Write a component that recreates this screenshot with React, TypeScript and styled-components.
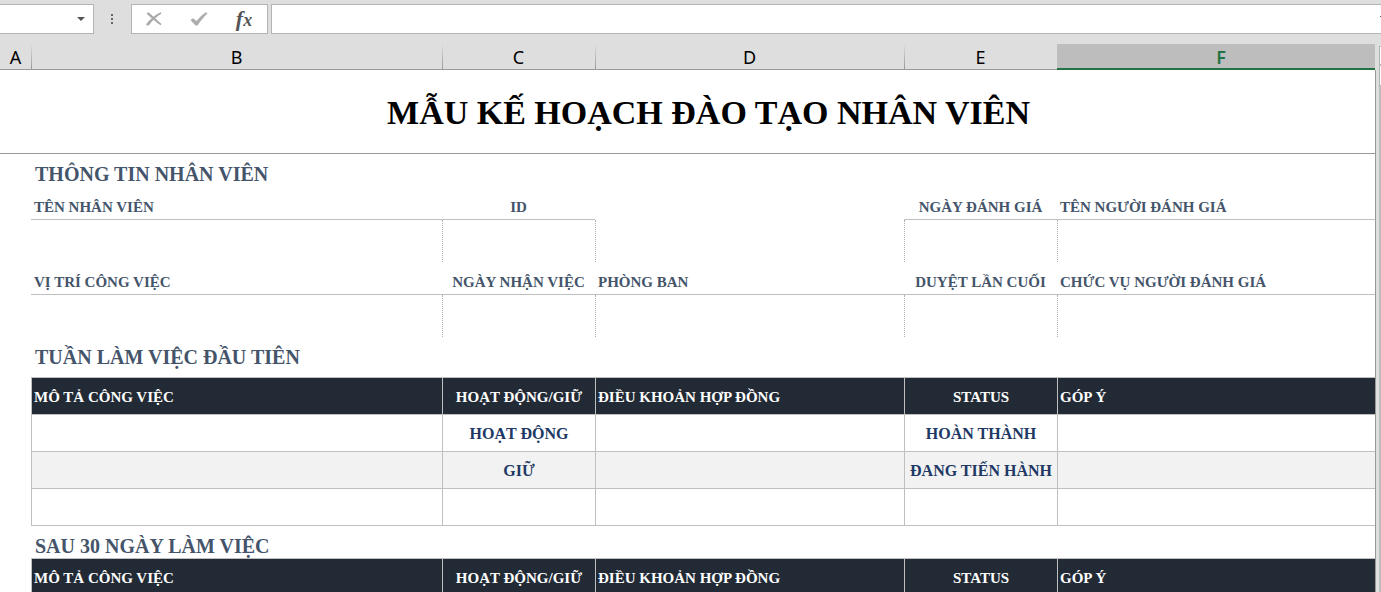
import React from "react";
import styled, { createGlobalStyle, css } from "styled-components";

const GlobalStyle = createGlobalStyle`
  *, *::before, *::after { box-sizing: border-box; }
  body { margin: 0; background: #dedede; }
`;

const color = {
  chrome: "#dedede",
  chromeBorder: "#b4b4b4",
  sheetBorder: "#999999",
  cellBorder: "#bfbfbf",
  heading: "#44546a",
  navy: "#203864",
  dark: "#222a35",
  stripe: "#f2f2f2",
  green: "#217346",
};

const cellColumns = "411fr 153px 309fr 153px 318fr";

const Shell = styled.div`
  display: flex;
  flex-direction: column;
  height: 100vh;
  overflow: hidden;
  background: ${color.chrome};
  font-family: "Liberation Serif", "Times New Roman", serif;
`;

const FormulaBar = styled.div`
  display: flex;
  flex: none;
  height: 44px;
  padding: 4px 0 10px;
`;

const NameBox = styled.div`
  display: flex;
  flex: none;
  width: 94px;
  background: #fff;
  border: 1px solid ${color.chromeBorder};
  border-left: 0;
`;

const BarInput = styled.input`
  flex: 1;
  min-width: 0;
  padding: 0 6px;
  border: 0;
  outline: 0;
  background: transparent;
  font: 16px "Noto Sans", sans-serif;
`;

const BarButton = styled.button<{ $width: number }>`
  display: flex;
  flex: none;
  align-items: center;
  justify-content: center;
  width: ${(p) => p.$width}px;
  padding: 0;
  border: 0;
  background: transparent;
  overflow: hidden;
`;

const Grip = styled.svg`
  flex: none;
  width: 37px;
  height: 30px;
`;

const ButtonGroup = styled.div`
  display: flex;
  flex: none;
  width: 137px;
  margin-right: 3px;
  background: #fff;
  border: 1px solid ${color.chromeBorder};
`;

const FormulaField = styled.div`
  display: flex;
  flex: 1;
  min-width: 0;
  background: #fff;
  border: 1px solid ${color.chromeBorder};
  border-right: 0;
`;

const Workspace = styled.div`
  display: flex;
  flex: 1;
  min-height: 0;
`;

const Pane = styled.div`
  display: flex;
  flex-direction: column;
  flex: 1;
  min-width: 0;
`;

const ColumnHeaders = styled.div`
  display: grid;
  flex: none;
  grid-template-columns: 31px ${cellColumns};
  height: 26px;
  margin-right: 1px;
  font: 18px/27px "Noto Sans", sans-serif;
  text-align: center;
`;

const ColumnHeader = styled.div<{ $active?: boolean; $first?: boolean }>`
  height: 26px;
  border-bottom: 1px solid ${color.sheetBorder};
  color: #000;
  ${(p) =>
    !p.$first &&
    css`
      background: linear-gradient(${color.chrome}, ${color.sheetBorder}) left / 1px 100% no-repeat;
    `}
  ${(p) =>
    p.$active &&
    css`
      padding-left: 10px;
      background: #bdbdbd;
      border-bottom: 2px solid ${color.green};
      color: ${color.green};
      font-weight: 600;
    `}
`;

const Sheet = styled.main`
  flex: 1;
  background: #fff;
  border-right: 1px solid ${color.sheetBorder};
`;

const Title = styled.h1`
  margin: 0;
  padding: 0 0 0 42px;
  height: 84px;
  border-bottom: 1px solid ${color.sheetBorder};
  font-size: 34px;
  line-height: 86px;
  text-align: center;
  color: #000;
`;

const Content = styled.div`
  padding-left: 31px;
`;

const SectionTitle = styled.h2<{ $compact?: boolean }>`
  display: flex;
  align-items: ${(p) => (p.$compact ? "flex-end" : "center")};
  height: ${(p) => (p.$compact ? 32 : 40)}px;
  margin: 0;
  padding-left: 4px;
  font-size: 20px;
  line-height: 24px;
  color: ${color.heading};
`;

const Table = styled.table`
  display: block;
  width: 100%;
`;

const Body = styled.tbody`
  display: block;
`;

const Head = styled.thead`
  display: block;
`;

const Row = styled.tr<{ $striped?: boolean }>`
  display: grid;
  grid-template-columns: ${cellColumns};
  background: ${(p) => (p.$striped ? color.stripe : "transparent")};
`;

const FieldLabel = styled.th<{ $center?: boolean; $line?: boolean; $tall?: boolean }>`
  height: ${(p) => (p.$tall ? 33 : 26)}px;
  padding: ${(p) => (p.$tall ? 11 : 4)}px 0 0 ${(p) => (p.$center ? 0 : 3)}px;
  border-bottom: 1px solid ${(p) => (p.$line ? color.cellBorder : "transparent")};
  font-size: 15px;
  line-height: 18px;
  text-align: ${(p) => (p.$center ? "center" : "left")};
  white-space: nowrap;
  color: ${color.heading};
`;

const FieldValue = styled.td<{ $divided?: boolean }>`
  height: 42px;
  padding: 0;
  border-left: 1px ${(p) => (p.$divided ? "dotted" : "none")} #b0b0b0;
`;

const HeadCell = styled.th<{ $center?: boolean }>`
  height: 37px;
  padding: 0 2px;
  background: ${color.dark};
  border-top: 1px solid ${color.cellBorder};
  border-left: 1px solid ${color.cellBorder};
  font-size: 15px;
  line-height: 38px;
  text-align: ${(p) => (p.$center ? "center" : "left")};
  white-space: nowrap;
  color: #fff;
`;

const Cell = styled.td<{ $last?: boolean }>`
  height: ${(p) => (p.$last ? 38 : 37)}px;
  padding: 0;
  border-top: 1px solid ${color.cellBorder};
  border-bottom: ${(p) => (p.$last ? `1px solid ${color.cellBorder}` : 0)};
  border-left: 1px solid ${color.cellBorder};
  font-size: 16px;
  font-weight: bold;
  line-height: 38px;
  text-align: center;
  white-space: nowrap;
  color: ${color.navy};
`;

const ScrollRail = styled.div`
  display: flex;
  flex-direction: column;
  flex: none;
  width: 5px;
  padding: 2px 0 0 3px;
`;

const ScrollButton = styled.div<{ $height: number }>`
  flex: none;
  height: ${(p) => p.$height}px;
  background: #fff;
  border: 1px solid ${color.chromeBorder};
  border-right: 0;
`;

const ScrollTrack = styled.div`
  flex: 1;
  background: #bdbdbd;
`;

const FxText = styled.span`
  font: italic bold 22px/24px "Liberation Serif", serif;
  color: #555;

  small {
    font-size: 18px;
  }
`;

type Field = { label: string; center?: boolean; line: boolean };

const personFields: Field[] = [
  { label: "TÊN NHÂN VIÊN", line: true },
  { label: "ID", center: true, line: true },
  { label: "", line: false },
  { label: "NGÀY ĐÁNH GIÁ", center: true, line: true },
  { label: "TÊN NGƯỜI ĐÁNH GIÁ", line: true },
];

const jobFields: Field[] = [
  { label: "VỊ TRÍ CÔNG VIỆC", line: true },
  { label: "NGÀY NHẬN VIỆC", center: true, line: true },
  { label: "PHÒNG BAN", line: true },
  { label: "DUYỆT LẦN CUỐI", center: true, line: true },
  { label: "CHỨC VỤ NGƯỜI ĐÁNH GIÁ", line: true },
];

const planHeads = ["MÔ TẢ CÔNG VIỆC", "HOẠT ĐỘNG/GIỮ", "ĐIỀU KHOẢN HỢP ĐỒNG", "STATUS", "GÓP Ý"];

const firstWeek = [
  ["", "HOẠT ĐỘNG", "", "HOÀN THÀNH", ""],
  ["", "GIỮ", "", "ĐANG TIẾN HÀNH", ""],
  ["", "", "", "", ""],
];

function FieldRows({ fields, tall }: { fields: Field[]; tall?: boolean }) {
  return (
    <>
      <Row>
        {fields.map((f, i) => (
          <FieldLabel key={i} scope="col" $center={f.center} $line={f.line} $tall={tall}>
            {f.label}
          </FieldLabel>
        ))}
      </Row>
      <Row>
        {fields.map((_, i) => (
          <FieldValue key={i} $divided={i > 0} />
        ))}
      </Row>
    </>
  );
}

function PlanTable({ rows }: { rows: string[][] }) {
  return (
    <Table cellSpacing={0}>
      <Head>
        <Row>
          {planHeads.map((h, i) => (
            <HeadCell key={h} scope="col" $center={i % 2 === 1}>
              {h}
            </HeadCell>
          ))}
        </Row>
      </Head>
      <Body>
        {rows.map((row, r) => (
          <Row key={r} $striped={r % 2 === 1}>
            {row.map((text, i) => (
              <Cell key={i} $last={r === rows.length - 1}>
                {text}
              </Cell>
            ))}
          </Row>
        ))}
      </Body>
    </Table>
  );
}

export default function App() {
  return (
    <Shell>
      <GlobalStyle />
      <FormulaBar>
        <NameBox>
          <BarInput aria-label="Name box" />
          <BarButton $width={24} aria-label="Open name list">
            <svg width="8" height="4" viewBox="0 0 8 4">
              <path d="M0 0h8L4 4z" fill="#555" />
            </svg>
          </BarButton>
        </NameBox>
        <Grip viewBox="0 0 37 30" aria-hidden="true">
          <path d="M17 10h2v2h-2zM17 14h2v2h-2zM17 18h2v2h-2z" fill="#666" />
        </Grip>
        <ButtonGroup>
          <BarButton $width={44} aria-label="Cancel">
            <svg width="16" height="14" viewBox="0 0 16 14" fill="#a9a9a9">
              <path d="M0.500 1.500L2.500 0.200C6 3 11 8 15.500 12L14.500 13.300C10 10 5 6 0.500 1.500Z" />
              <path d="M14.500 0.300L15.500 1.500C10 5 6 9 3 13.200L0.500 13.500L0.300 12C4 7.500 9 3 14.500 0.300Z" />
            </svg>
          </BarButton>
          <BarButton $width={46} aria-label="Enter">
            <svg width="18" height="14" viewBox="0 0 18 14">
              <path d="M0.500 8L3 6.200L6.500 9C9.500 5.500 12.500 2.500 16 0.300L17.500 1.500C13.500 5 10.500 9 7.500 13.500H5.500Z" fill="#adadad" />
            </svg>
          </BarButton>
          <BarButton $width={44} aria-label="Insert function">
            <FxText>
              f<small>x</small>
            </FxText>
          </BarButton>
        </ButtonGroup>
        <FormulaField>
          <BarInput aria-label="Formula" />
          <BarButton $width={1} aria-label="Expand formula bar">
            <svg width="1" height="7" viewBox="0 0 1 7">
              <path d="M0 0h1v1h-1z" fill="#555" />
            </svg>
          </BarButton>
        </FormulaField>
      </FormulaBar>
      <Workspace>
        <Pane>
          <ColumnHeaders>
            {["A", "B", "C", "D", "E", "F"].map((c, i) => (
              <ColumnHeader key={c} $first={i === 0} $active={c === "F"}>
                {c}
              </ColumnHeader>
            ))}
          </ColumnHeaders>
          <Sheet>
            <Title>MẪU KẾ HOẠCH ĐÀO TẠO NHÂN VIÊN</Title>
            <Content>
              <SectionTitle>THÔNG TIN NHÂN VIÊN</SectionTitle>
              <Table cellSpacing={0}>
                <Body>
                  <FieldRows fields={personFields} />
                  <FieldRows fields={jobFields} tall />
                </Body>
              </Table>
              <SectionTitle>TUẦN LÀM VIỆC ĐẦU TIÊN</SectionTitle>
              <PlanTable rows={firstWeek} />
              <SectionTitle $compact>SAU 30 NGÀY LÀM VIỆC</SectionTitle>
              <PlanTable rows={[]} />
            </Content>
          </Sheet>
        </Pane>
        <ScrollRail>
          <ScrollButton $height={19} />
          <ScrollButton $height={21} />
          <ScrollTrack />
        </ScrollRail>
      </Workspace>
    </Shell>
  );
}
